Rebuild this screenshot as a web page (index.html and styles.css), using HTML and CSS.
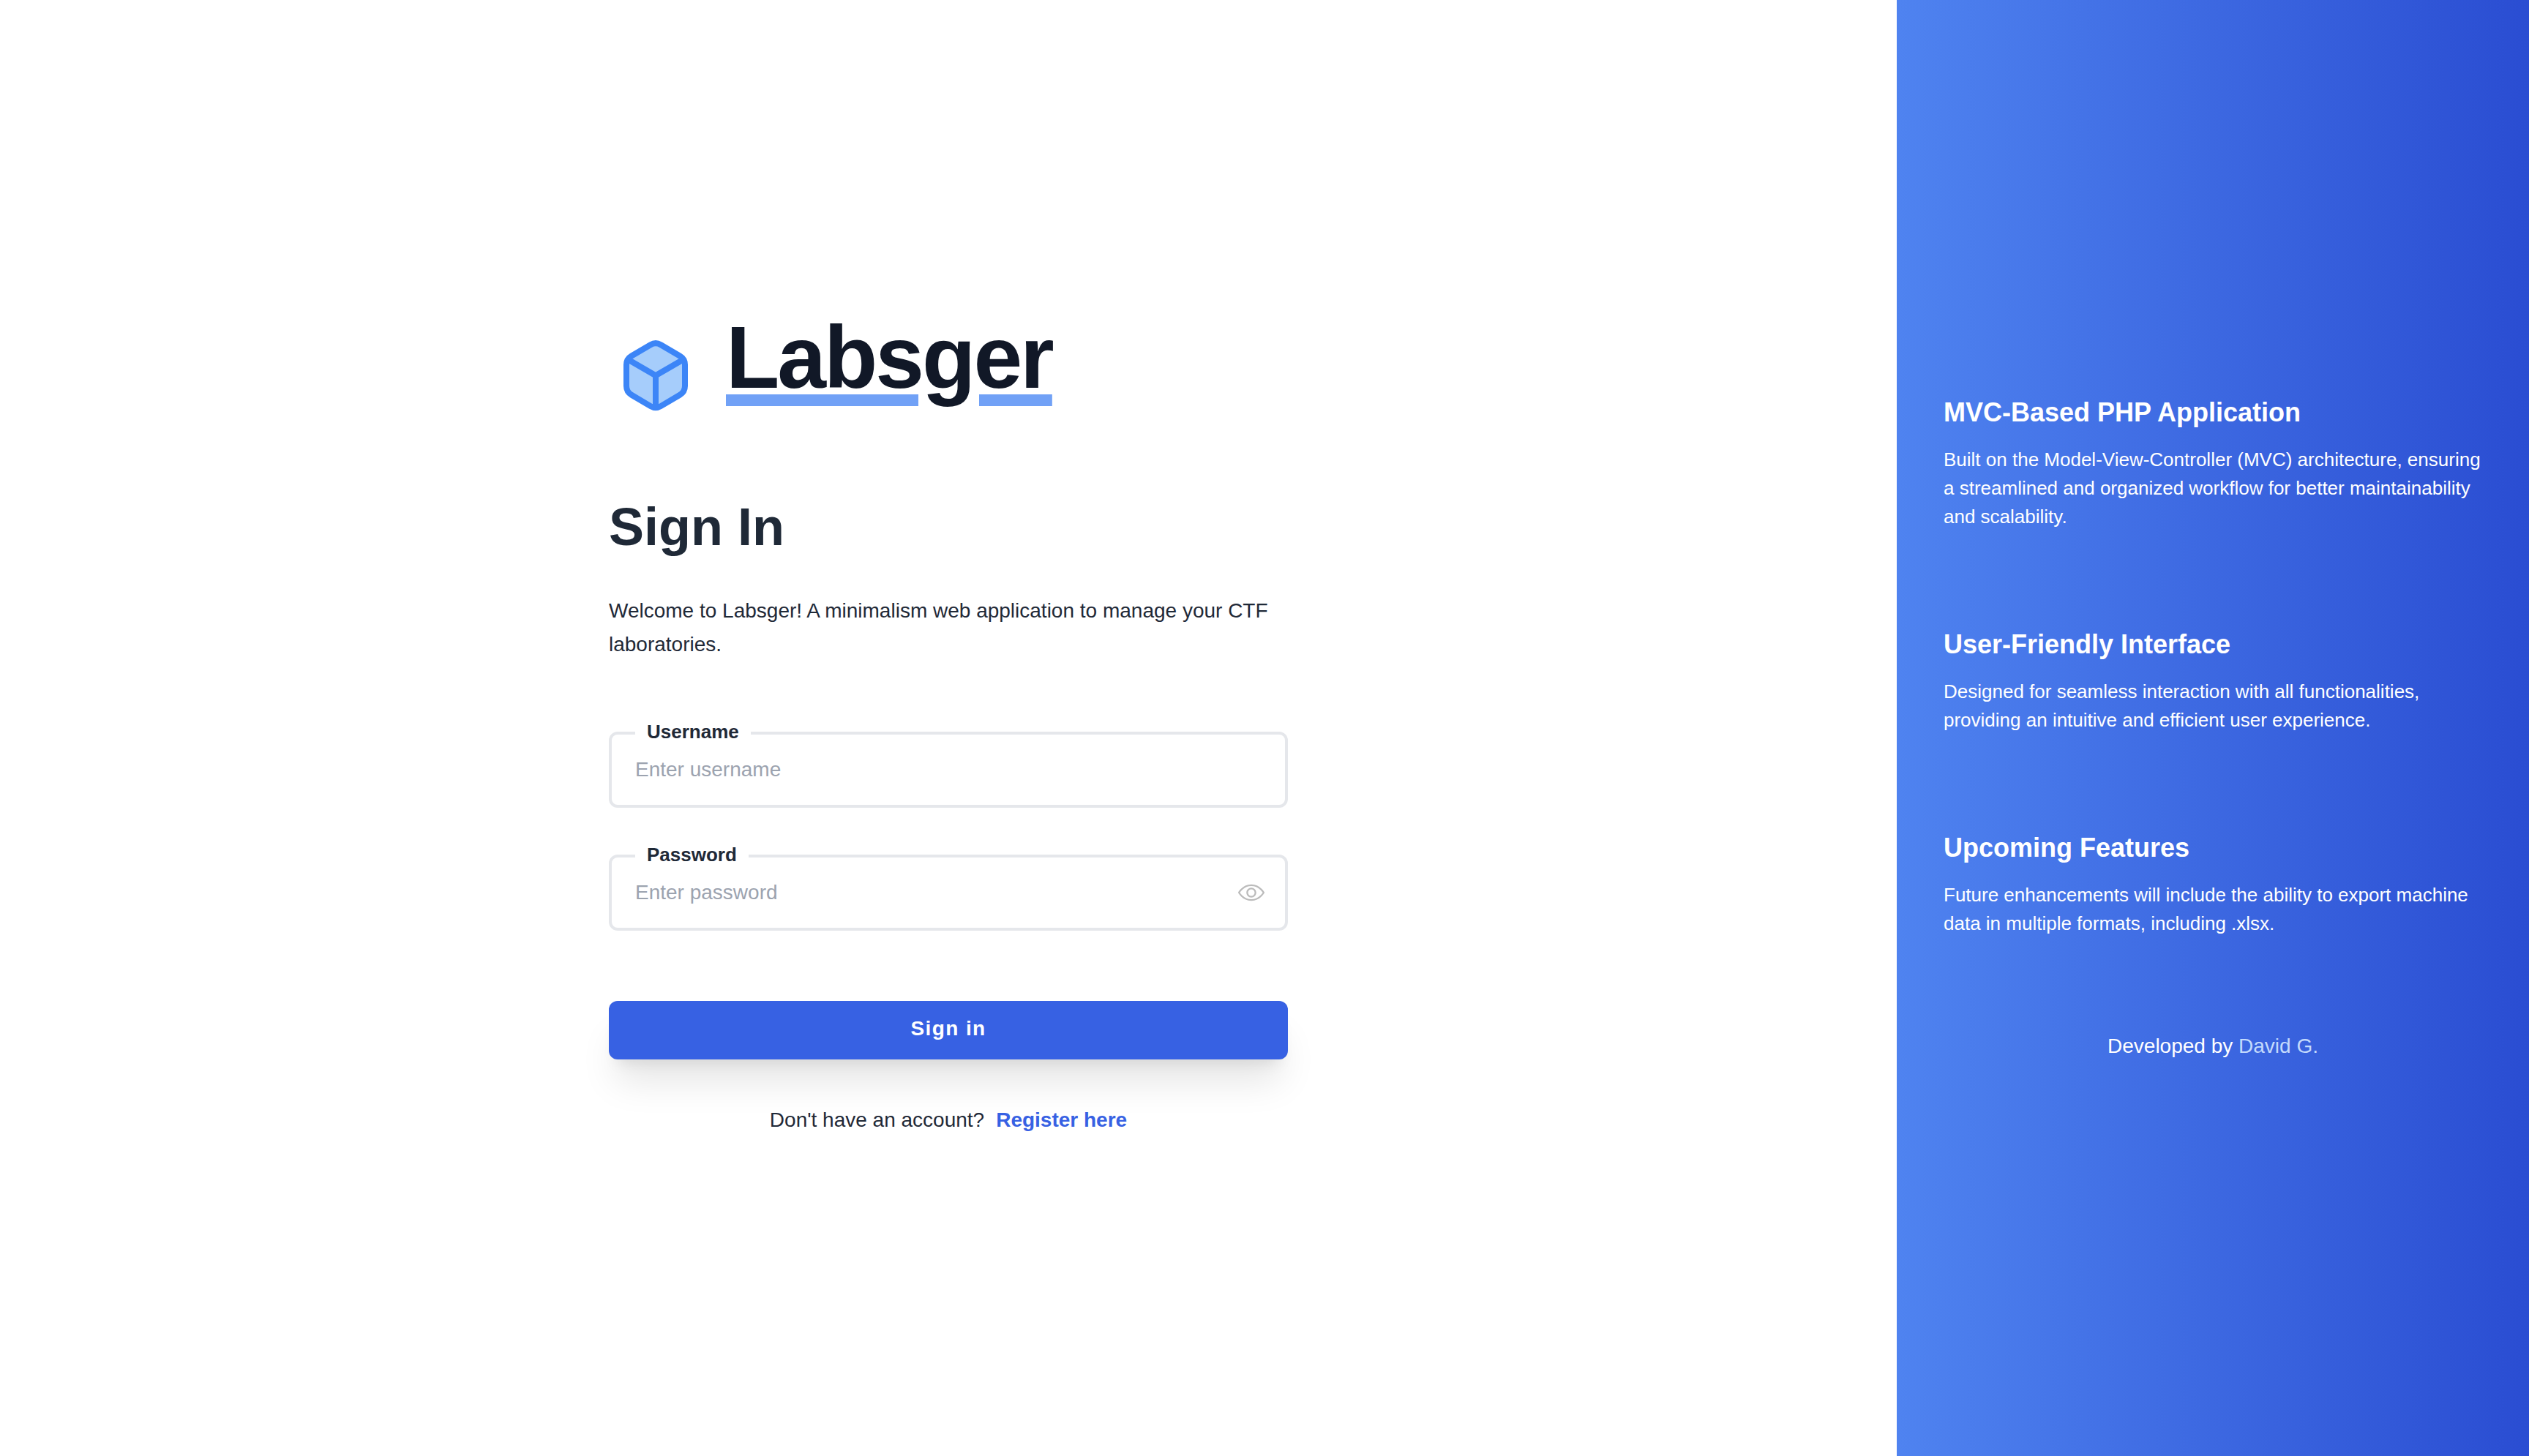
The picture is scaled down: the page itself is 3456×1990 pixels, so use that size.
FILE: index.html
```html
<!DOCTYPE html>
<html lang="en">
<head>
  <meta charset="utf-8">
  <meta name="viewport" content="width=device-width, initial-scale=1">
  <title>Labsger - Sign In</title>
  <link rel="stylesheet" href="styles.css">
</head>
<body>
  <div class="page">
    <main class="main">
      <div class="panel">
        <div class="brand">
          <svg class="brand-icon" viewBox="0 0 88 97" aria-hidden="true">
            <path class="cube-fill" d="M37 6.2Q44 2 51 6.2L77 21.5Q84 25.6 84 33.6V62.6Q84 70.7 77 74.8L51 90.1Q44 94.3 37 90.1L11 74.8Q4 70.7 4 62.6V33.6Q4 25.6 11 21.5Z"/>
            <path class="cube-line" d="M6 26.3L44 48.3L82 26.3M44 48.3V92"/>
          </svg>
          <span class="brand-name">Labsger</span>
        </div>
        <h1 class="title">Sign In</h1>
        <p class="intro">Welcome to Labsger! A minimalism web application to manage your CTF laboratories.</p>
        <form class="form">
          <div class="field">
            <label class="field-label" for="username">Username</label>
            <input class="field-input" id="username" type="text" placeholder="Enter username">
          </div>
          <div class="field">
            <label class="field-label" for="password">Password</label>
            <input class="field-input" id="password" type="password" placeholder="Enter password">
            <button class="field-toggle" type="button" aria-label="Show password">
              <svg class="eye" viewBox="0 0 128 128" aria-hidden="true"><path d="M64 104C22.127 104 1.367 67.496.504 65.943a4 4 0 0 1 0-3.887C1.367 60.504 22.127 24 64 24s62.633 36.504 63.496 38.057a4 4 0 0 1 0 3.887C126.633 67.496 105.873 104 64 104zM8.707 63.994C13.465 71.205 32.146 96 64 96c31.955 0 50.553-24.775 55.293-31.994C114.535 56.795 95.854 32 64 32 32.045 32 13.445 56.775 8.707 63.994zM64 88c-13.234 0-24-10.766-24-24s10.766-24 24-24 24 10.766 24 24-10.766 24-24 24zm0-40c-8.822 0-16 7.178-16 16s7.178 16 16 16 16-7.178 16-16-7.178-16-16-16z"/></svg>
            </button>
          </div>
          <button class="submit" type="submit">Sign in</button>
        </form>
        <p class="register"><span>Don't have an account?</span><a class="register-link" href="#register">Register here</a></p>
      </div>
    </main>
    <aside class="aside">
      <section class="feature">
        <h2 class="feature-title">MVC-Based PHP Application</h2>
        <p class="feature-text">Built on the Model-View-Controller (MVC) architecture, ensuring a streamlined and organized workflow for better maintainability and scalability.</p>
      </section>
      <section class="feature">
        <h2 class="feature-title">User-Friendly Interface</h2>
        <p class="feature-text">Designed for seamless interaction with all functionalities, providing an intuitive and efficient user experience.</p>
      </section>
      <section class="feature">
        <h2 class="feature-title">Upcoming Features</h2>
        <p class="feature-text">Future enhancements will include the ability to export machine data in multiple formats, including .xlsx.</p>
      </section>
      <p class="credit">Developed by <a class="credit-link" href="#author">David G.</a></p>
    </aside>
  </div>
</body>
</html>
```
FILE: styles.css
```css
* { box-sizing: border-box; margin: 0; padding: 0; }

body {
  font-family: "Liberation Sans", Arial, sans-serif;
  font-size: 28px;
  color: #1f2937;
  background: #fff;
}

a { text-decoration: none; }

.page {
  display: grid;
  grid-template-columns: 3fr 1fr;
  min-height: 100vh;
}

.main {
  display: flex;
  align-items: center;
  justify-content: center;
}

.panel { width: 100%; max-width: 928px; }

.brand {
  display: flex;
  align-items: flex-start;
  gap: 52px;
  padding-left: 20px;
}

.brand-icon {
  width: 88px;
  height: 97px;
  margin-top: 37px;
}

.cube-fill, .cube-line {
  stroke: #3c85f7;
  stroke-width: 8;
  stroke-linejoin: round;
}
.cube-fill { fill: #a6cdfb; }
.cube-line { fill: none; }

.brand-name {
  font-size: 120px;
  line-height: 120px;
  font-weight: 700;
  letter-spacing: -3px;
  color: #111827;
  text-decoration: underline #71a1f6 16px;
  text-underline-offset: 9px;
}

.title {
  margin-top: 122px;
  font-size: 72px;
  line-height: 72px;
}

.intro {
  margin-top: 56px;
  line-height: 46px;
}

.form {
  display: flex;
  flex-direction: column;
  gap: 64px;
  margin-top: 96px;
}

.field {
  position: relative;
  display: flex;
  padding: 28px 28px 28px 32px;
  border: 4px solid #e5e7eb;
  border-radius: 12px;
}

.field-label {
  position: absolute;
  top: -24px;
  left: 32px;
  padding: 0 16px;
  font-size: 26px;
  line-height: 40px;
  font-weight: 700;
  background: #fff;
}

.field-input {
  flex: 1;
  height: 40px;
  border: 0;
  outline: 0;
  font: inherit;
  color: inherit;
  background: transparent;
}
.field-input::placeholder { color: #9ca3af; opacity: 1; }

.field-toggle {
  display: flex;
  align-items: center;
  border: 0;
  background: none;
}

.eye { width: 36px; height: 36px; fill: #bbb; }

.submit {
  height: 80px;
  margin-top: 32px;
  padding-bottom: 4px;
  border: 0;
  border-radius: 12px;
  font: inherit;
  font-weight: 700;
  letter-spacing: 0.05em;
  color: #fff;
  background: #3761e3;
  box-shadow: 0 40px 50px -10px rgba(0, 0, 0, .1), 0 16px 20px -12px rgba(0, 0, 0, .1);
}

.register {
  display: flex;
  justify-content: center;
  gap: 16px;
  margin-top: 52px;
  line-height: 62px;
}

.register-link { font-weight: 700; color: #3761e3; }

.aside {
  display: flex;
  flex-direction: column;
  justify-content: center;
  gap: 126px;
  padding: 0 64px;
  color: #fff;
  background: linear-gradient(to right, #4f83f0, #2a4dd2);
}

.feature-title {
  margin-bottom: 16px;
  font-size: 36px;
  line-height: 58px;
}

.feature-text { font-size: 26px; line-height: 39px; }

.credit {
  padding-bottom: 4px;
  line-height: 44px;
  text-align: center;
}

.credit-link { color: #c3dafc; }
```
